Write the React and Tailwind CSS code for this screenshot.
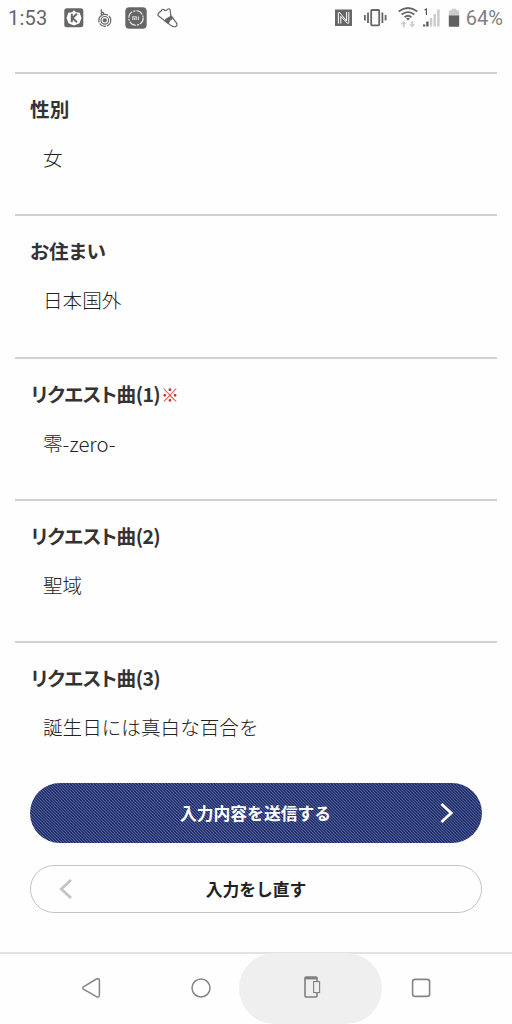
import React from 'react';

const fields = [
  { label: '性別', value: '女' },
  { label: 'お住まい', value: '日本国外' },
  { label: 'リクエスト曲', number: '(1)', value: '零', suffix: '-zero-', required: true },
  { label: 'リクエスト曲', number: '(2)', value: '聖域' },
  { label: 'リクエスト曲', number: '(3)', value: '誕生日には真白な百合を' },
];

const StatusBar = () => (
  <header className="flex h-9 items-center justify-between pl-[8px] pr-[9px] text-[#666]">
    <div className="flex items-center">
      <span className="w-[56px] font-[Roboto,sans-serif] text-[20px] leading-9 tracking-[0.2px] text-[#666]">1:53</span>

      {/* K app */}
      <svg className="h-[20px] w-[20px]" viewBox="0 0 20 20">
        <rect x="0.3" y="0.3" width="19" height="19" rx="2.5" fill="#666" />
        <path d="M10 2.2 12 4.2 15.7 4.8 17.5 10 15.5 15.2 10 17.6 4.5 15.2 2.5 10 4.3 4.8 8 4.2Z" fill="#fff" />
        <path d="M7.8 5.8V14.3M12.9 5.8 8.4 10.1 13 14.3" fill="none" stroke="#666" strokeWidth="2" />
      </svg>

      {/* spiral */}
      <svg className="ml-[13px] h-[20px] w-[16px]" viewBox="0 0 16 20" fill="none" stroke="#666" strokeWidth="1.2">
        <circle cx="7.8" cy="12.3" r="6" strokeDasharray="7 1" />
        <circle cx="7.8" cy="12.3" r="3.8" />
        <circle cx="7.8" cy="12.3" r="1.5" fill="#666" />
        <path d="M4.3 1.2V8.4M4.3 5Q6.5 3.4 6.8 5.4L5.8 7" />
      </svg>

      {/* round dial */}
      <svg className="ml-[12px] h-[22px] w-[22px]" viewBox="0 0 22 22" fill="none">
        <rect x="0.3" y="0.3" width="21.4" height="21.4" rx="4" fill="#666" />
        <circle cx="11" cy="11" r="7.2" stroke="#eee" strokeWidth="1.1" strokeDasharray="7 1.2 2 1.2" />
        <path d="M7.8 13V9.8H11.2V13M9.5 11V13M13.4 9.5V13" stroke="#ddd" strokeWidth="1.1" />
      </svg>

      {/* shoe */}
      <svg className="ml-[10px] h-[22px] w-[22px]" viewBox="0 0 22 22" fill="none" stroke="#666" strokeWidth="1.2" strokeLinejoin="round">
        <path d="M1 8.5Q.5 7 2 5.8L4.5 3.5Q5.5 1.5 7 2.8Q8.8 4.5 10.5 2.4Q12.3 .8 13.2 3L13.7 8.4 19.3 15.6Q21 18.8 18.5 19.6Q16.5 20.2 14 18.6Z" />
        <path d="M8.2 14.3 8.6 12.6 14 9.2 15.6 11.2 12.6 13.6 11.4 16.4Z" fill="#666" />
      </svg>
    </div>

    <div className="flex items-center">
      {/* NFC */}
      <svg className="h-[18px] w-[18px]" viewBox="0 0 18 18" fill="none">
        <rect x="0" y="0.5" width="17" height="16.5" fill="#666" />
        <path d="M3.4 14.6V4Q3.8 2.6 5 4L11.6 12V3M5.8 14.6V7.4L12.2 14Q13.8 15.2 13.8 13.4V3" stroke="#fff" strokeWidth="1" />
      </svg>

      {/* vibrate */}
      <svg className="ml-[11px] h-[20px] w-[24px]" viewBox="0 0 24 20" fill="none" stroke="#666" strokeWidth="1.8">
        <rect x="7.2" y="2" width="8" height="15.4" rx="0.8" />
        <path d="M4 4.5V15M0.9 7V12.5M18.4 4.5V15M21.6 7V12.5" />
      </svg>

      {/* wifi with traffic arrows */}
      <svg className="ml-[10px] h-[22px] w-[20px]" viewBox="0 0 20 22" fill="none">
        <path d="M.7 4.4Q10-2.4 19.3 4.4M3.6 7.5Q10 2.6 16.4 7.5M6.6 10.2Q10 7.4 13.4 10.2" stroke="#666" strokeWidth="1.8" />
        <path d="M8 11.5Q10 9.8 12 11.5L10 13.6Z" fill="#666" />
        <path d="M5.7 14 8.7 17.3H6.7V20.2H4.7V17.3H2.7ZM14.2 20.5 11.2 17.2H13.2V14.3H15.2V17.2H17.2Z" fill="#ccc" />
      </svg>

      {/* signal */}
      <svg className="ml-[5px] h-[20px] w-[17px]" viewBox="0 0 17 20" fill="none">
        <path d="M1.5 2 3.4 1V7" stroke="#555" strokeWidth="1.2" />
        <path d="M1.2 18.5V16.6M4.4 18.5V13.4" stroke="#555" strokeWidth="2.2" />
        <path d="M8 18.5V10M11.7 18.5V6M15.4 18.5V1.5" stroke="#ccc" strokeWidth="2.5" />
      </svg>

      {/* battery */}
      <svg className="ml-[8px] h-[20px] w-[12px]" viewBox="0 0 12 20">
        <path d="M.8 3Q.8 2.2 1.8 2.2H3.8V.8H8.2V2.2H10.2Q11.2 2.2 11.2 3V8H.8Z" fill="#ccc" />
        <path d="M.8 7.5H11.2V18Q11.2 18.8 10.4 18.8H1.6Q.8 18.8.8 18Z" fill="#606060" />
      </svg>
      <span className="ml-[6px] font-[Roboto,sans-serif] text-[20px] leading-9 text-[#808080]">64%</span>
    </div>
  </header>
);

const Field = ({ label, number, value, suffix, required }) => (
  <div className="h-[142.25px] border-t-2 border-[#d0d0d0] pl-[15px]">
    <dt className="mt-[19px] flex h-8 text-[19.6px] leading-8 font-bold text-[#333]">
      {number ? (
        <span className="pl-px tracking-[-0.5px] [font-feature-settings:'palt']">{label}</span>
      ) : (
        <span className="tracking-[0.15px] [font-feature-settings:'palt']">{label}</span>
      )}
      {number && <span className="tracking-[-0.7px]">{number}</span>}
      {required && <span className="ml-[1px] text-[18px] font-normal text-[#dc2430]">※</span>}
    </dt>
    <dd className="mt-[17px] flex h-8 pl-[13px] text-[19.6px] leading-8 font-light text-[#222]">
      {value}
      {suffix && <span className="text-[20.4px]">{suffix}</span>}
    </dd>
  </div>
);

const NavBar = () => (
  <nav className="flex h-[72px] border-t-2 border-[#e2e2e2] pl-[20px]">
    <div className="flex h-[68px] w-[142px] items-center justify-center">
      <svg className="h-5 w-5" viewBox="0 0 20 20" fill="none" stroke="#858585" strokeWidth="1.5" strokeLinejoin="round">
        <path d="M2.4 8.9 15.5 1Q18.2-.1 18.4 2.2V17.3Q18.2 19.8 15.5 18.7L2.4 11.1Q1.1 10 2.4 8.9Z" />
      </svg>
    </div>
    <div className="flex h-[68px] w-[77px] items-center justify-center">
      <svg className="h-5 w-5" viewBox="0 0 20 20" fill="none" stroke="#858585" strokeWidth="1.5">
        <circle cx="10" cy="10" r="9" />
      </svg>
    </div>
    <div className="-mt-px flex h-[71px] w-[143px] items-center justify-center rounded-full bg-[#efefef] pb-[3px]">
      <svg className="ml-[3px] h-[22px] w-[17px]" viewBox="0 0 17 22" fill="none" stroke="#808080">
        <path d="M13 5.5V2Q13 1 12 1H2Q1 1 1 2V20Q1 21 2 21H12Q13 21 13 20V17" strokeWidth="1.6" />
        <path d="M1 2.2H13" strokeWidth="2.4" />
        <rect x="9.6" y="5.6" width="6" height="11" strokeWidth="1.1" />
      </svg>
    </div>
    <div className="flex h-[68px] w-[78px] items-center justify-center">
      <svg className="h-5 w-5" viewBox="0 0 20 20" fill="none" stroke="#858585" strokeWidth="1.6">
        <rect x="1.6" y="1.4" width="17" height="17" rx="2.5" />
      </svg>
    </div>
  </nav>
);

const App = () => {
  return (
    <div className="flex h-[1024px] w-[512px] flex-col overflow-hidden bg-[#fefefe] font-['Noto_Sans_CJK_JP',sans-serif]">
      <StatusBar />

      <main className="flex-1 pt-[36px]">
        <dl className="mx-[15px]">
          {fields.map((field, index) => (
            <Field key={index} {...field} />
          ))}
        </dl>

        <div className="mr-[30px] ml-[30px] flex flex-col gap-[22px]">
          <button className="flex h-[60px] items-center rounded-full bg-[#2d3c7b] bg-[repeating-linear-gradient(45deg,#24326f_0px,#24326f_0.9px,#5a699f_1.5px,#24326f_2.12px)] text-[16.8px] font-bold text-white">
            <span className="flex-1 pl-[41px] text-center">入力内容を送信する</span>
            <svg className="mr-[28px] h-[20px] w-[14px]" viewBox="0 0 14 20" fill="none" stroke="#fff" strokeWidth="2.8">
              <path d="M1.5 1 11.2 10 1.5 19" />
            </svg>
          </button>
          <button className="flex h-[48px] items-center rounded-full border border-[#c4c4c4] text-[16.8px] font-bold text-[#222]">
            <svg className="ml-[28px] h-[20px] w-[14px]" viewBox="0 0 14 20" fill="none" stroke="#c4c4c4" strokeWidth="2.8">
              <path d="M12 1 2.3 10 12 19" />
            </svg>
            <span className="flex-1 pr-[42px] text-center">入力をし直す</span>
          </button>
        </div>
      </main>

      <NavBar />
    </div>
  );
};

export default App;
